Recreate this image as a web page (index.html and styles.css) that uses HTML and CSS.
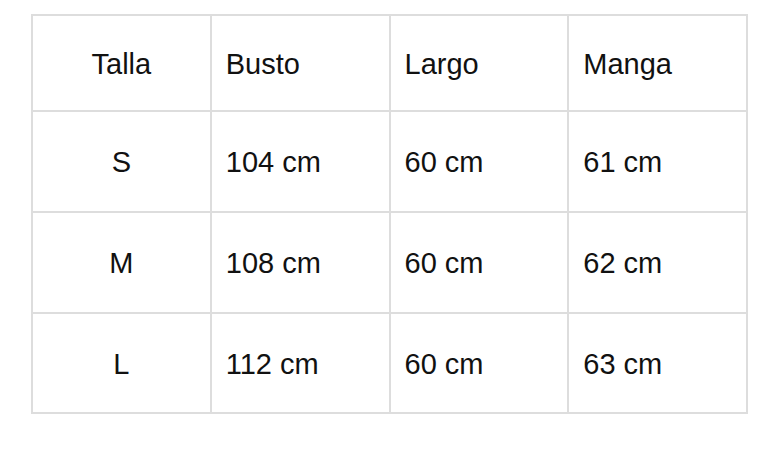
FILE: index.html
```html
<!DOCTYPE html>
<html lang="es">
<head>
<meta charset="utf-8">
<title>Tabla de tallas</title>
<link rel="stylesheet" href="styles.css">
</head>
<body>
<table class="size-table">
  <thead>
    <tr>
      <th class="size-col">Talla</th>
      <th>Busto</th>
      <th>Largo</th>
      <th>Manga</th>
    </tr>
  </thead>
  <tbody>
    <tr>
      <td class="size-col">S</td>
      <td>104 cm</td>
      <td>60 cm</td>
      <td>61 cm</td>
    </tr>
    <tr>
      <td class="size-col">M</td>
      <td>108 cm</td>
      <td>60 cm</td>
      <td>62 cm</td>
    </tr>
    <tr>
      <td class="size-col">L</td>
      <td>112 cm</td>
      <td>60 cm</td>
      <td>63 cm</td>
    </tr>
  </tbody>
</table>
</body>
</html>
```
FILE: styles.css
```css
html, body {
  margin: 0;
  padding: 0;
  background: #ffffff;
}

body {
  font-family: "Liberation Sans", Arial, sans-serif;
  color: #111111;
  padding: 14px 0 0 31px;
}

.size-table {
  border-collapse: separate;
  border-spacing: 0;
  table-layout: fixed;
  width: 717px;
  border-left: 2px solid #dddddd;
  border-top: 2px solid #dddddd;
}

.size-table th,
.size-table td {
  box-sizing: border-box;
  border-right: 2px solid #dddddd;
  border-bottom: 2px solid #dddddd;
  font-size: 29px;
  font-weight: normal;
  line-height: 42px;
  text-align: left;
  vertical-align: middle;
  padding: 29px 12px 28px 14px;
}

.size-table th {
  padding: 27px 12px 25px 14px;
}

.size-table tbody tr:last-child td {
  padding-bottom: 27px;
}

.size-table .size-col {
  text-align: center;
  padding-left: 12px;
  padding-right: 12px;
}
```
